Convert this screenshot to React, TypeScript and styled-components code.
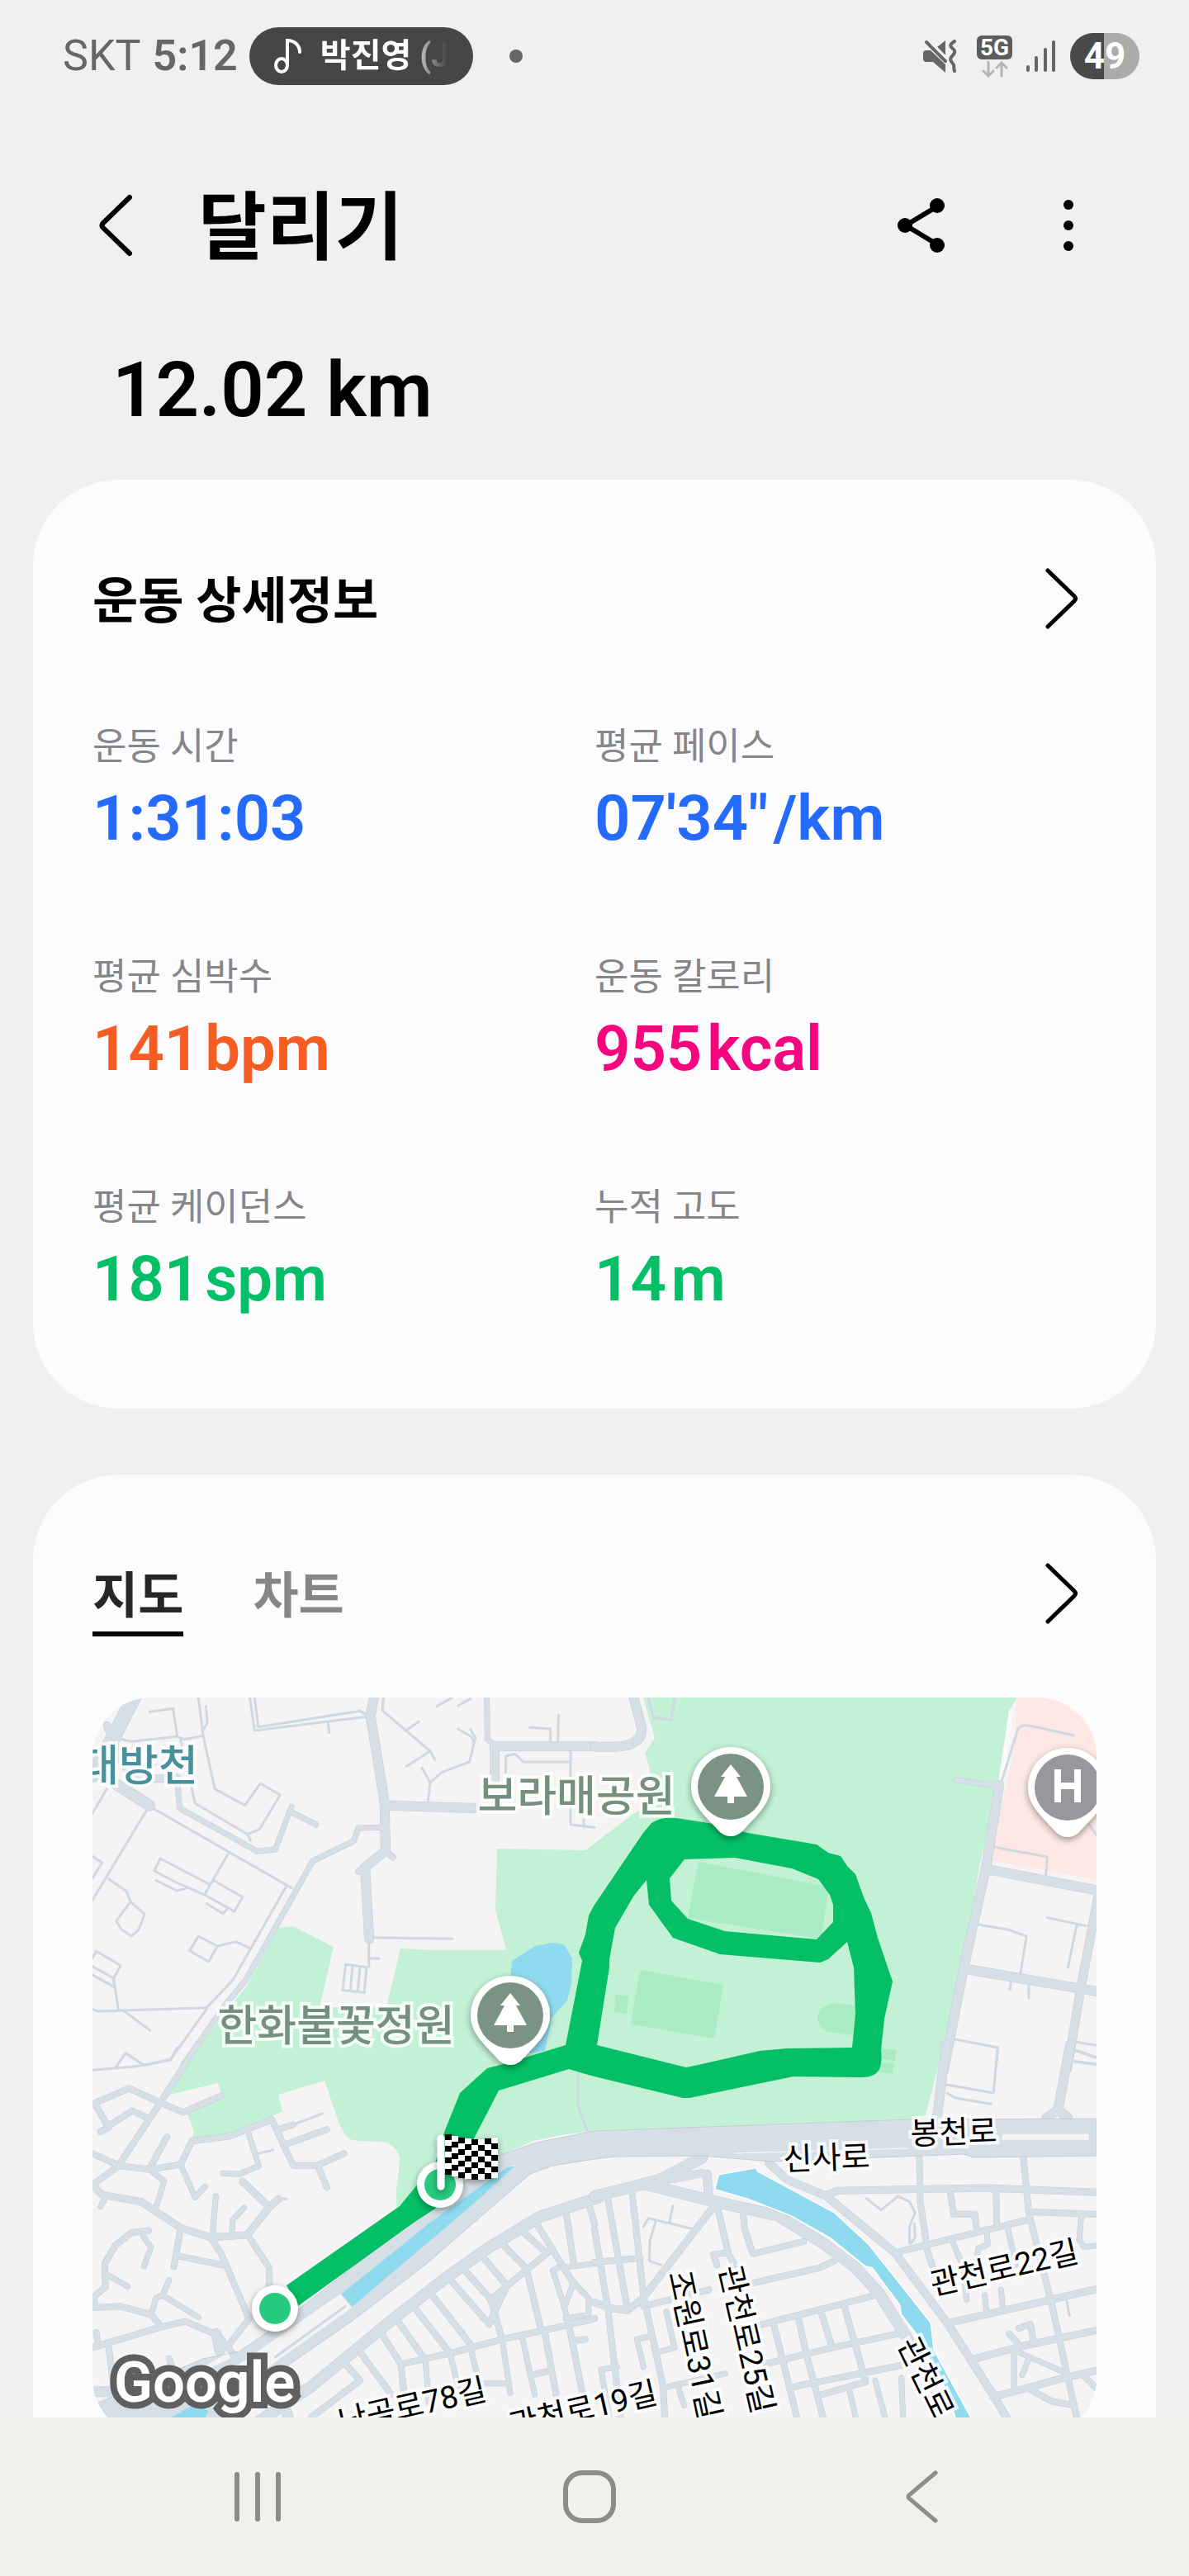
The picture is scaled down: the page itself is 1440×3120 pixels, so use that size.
import * as React from 'react';
import styled, { createGlobalStyle } from 'styled-components';

const colors = {
    page: '#f0f0f2',
    card: '#fcfcfe',
    nav: '#eff1ec',
    navIcon: '#8b8d88',
    status: '#666666',
    label: '#868688',
    blue: '#246bfd',
    orange: '#f55d22',
    pink: '#f7047f',
    green: '#04bf65',
    land: '#f5f3f4',
    park: '#c3f1d6',
    pitch: '#aaecc5',
    water: '#8fdaee',
    road: '#d6dfe6',
    roadEdge: '#c3ccd6',
    path: '#d0d8e2',
};

const GlobalStyle = createGlobalStyle`
    * {
        box-sizing: border-box;
    }
    body {
        margin: 0;
        background: ${colors.page};
        color: #000;
        font-family: Roboto, 'Noto Sans CJK KR', sans-serif;
    }
    button {
        border: 0;
        padding: 0;
        background: none;
        color: inherit;
        font: inherit;
        cursor: pointer;
    }
    h1, h2, p, dl, dd {
        margin: 0;
    }
    svg {
        display: block;
    }
`;

const Screen = styled.div`
    display: flex;
    flex-direction: column;
    height: 100vh;
`;

const Content = styled.main`
    flex: 1;
    min-height: 0;
    overflow: auto;
    scrollbar-width: none;
`;

/* Status bar */

const StatusBar = styled.div`
    display: flex;
    align-items: center;
    justify-content: space-between;
    flex: none;
    height: 136px;
    padding: 0 60px 0 76px;
    color: ${colors.status};
`;

const StatusGroup = styled.div<{ gap: number }>`
    display: flex;
    align-items: center;
    gap: ${(props) => props.gap}px;
`;

const Carrier = styled.span`
    font-size: 52px;
    line-height: 64px;
`;

const Clock = styled(Carrier)`
    font-weight: 600;
`;

const MusicChip = styled.div`
    display: flex;
    align-items: center;
    gap: 22px;
    width: 271px;
    height: 70px;
    padding: 0 28px 0 30px;
    border-radius: 35px;
    background: #454746;
    color: #fff;
`;

const ChipText = styled.span`
    flex: 1;
    overflow: hidden;
    font-size: 40px;
    font-weight: 700;
    line-height: 60px;
    white-space: nowrap;
    mask-image: linear-gradient(to right, #000 65%, transparent 98%);
`;

const NoticeDot = styled.span`
    width: 16px;
    height: 16px;
    margin-left: 30px;
    border-radius: 50%;
    background: ${colors.status};
`;

const Network = styled.div`
    display: flex;
    flex-direction: column;
    align-items: center;
    gap: 2px;
    margin-left: 8px;
`;

const NetworkBadge = styled.span`
    width: 43px;
    border-radius: 6px;
    background: #5c5c5c;
    color: #fff;
    font-size: 28px;
    font-weight: 700;
    line-height: 29px;
    text-align: center;
`;

const Battery = styled.span`
    width: 84px;
    border-radius: 28px;
    background: linear-gradient(to right, #4a4a4a 49%, #ababab 49%);
    color: #fff;
    font-size: 44px;
    font-weight: 700;
    line-height: 56px;
    text-align: center;
`;

/* Title area */

const Header = styled.header`
    display: flex;
    align-items: center;
    height: 273px;
    padding: 0 106px 0 100px;
`;

const IconButton = styled.button`
    display: flex;
    align-items: center;
    justify-content: center;
    width: 80px;
    height: 88px;
`;

const Title = styled.h1`
    flex: 1;
    margin-left: 60px;
    padding-top: 8px;
    font-size: 90px;
    font-weight: 700;
    line-height: 120px;
`;

const Actions = styled.div`
    display: flex;
    gap: 98px;
`;

const Distance = styled.p`
    margin: 0 136px 44px;
    font-size: 92px;
    font-weight: 600;
    line-height: 128px;
`;

/* Cards */

const Card = styled.section`
    margin: 0 40px 80px;
    padding: 100px 72px 109px;
    border-radius: 104px;
    background: ${colors.card};
`;

const CardHead = styled.div<{ space: number }>`
    display: flex;
    align-items: flex-start;
    justify-content: space-between;
    margin-bottom: ${(props) => props.space}px;
`;

const CardTitle = styled.h2`
    padding-top: 6px;
    font-size: 60px;
    font-weight: 700;
    line-height: 84px;
`;

const Tabs = styled.div`
    display: flex;
    gap: 84px;
`;

const Tab = styled.button<{ $active?: boolean }>`
    padding-top: 6px;
    border-bottom: 6px solid ${(props) => (props.$active ? '#000' : 'transparent')};
    color: ${(props) => (props.$active ? '#262628' : colors.label)};
    font-size: 60px;
    font-weight: 700;
    line-height: 84px;
`;

const Stats = styled.dl`
    display: grid;
    grid-template-columns: 1fr 1fr;
    row-gap: 109px;
`;

const StatLabel = styled.dt`
    margin-bottom: 2px;
    color: ${colors.label};
    font-size: 45px;
    line-height: 72px;
`;

const StatValue = styled.dd<{ color: string }>`
    display: flex;
    gap: 6px;
    color: ${(props) => props.color};
    font-size: 76px;
    font-weight: 600;
    line-height: 96px;
`;

/* Map */

const MapFrame = styled.div`
    overflow: hidden;
    border-radius: 72px;
    background: ${colors.land};

    svg {
        width: 100%;
        height: auto;
    }
`;

const Way = styled.path`
    fill: none;
    stroke-linecap: round;
    stroke-linejoin: round;
    vector-effect: non-scaling-stroke;
`;

const StreetText = styled.text`
    fill: #000;
    stroke: rgba(255, 255, 255, 0.8);
    stroke-width: 8px;
    paint-order: stroke;
    font-size: 38px;
    font-weight: 400;
    text-anchor: middle;
`;

const PlaceText = styled(StreetText)<{ color: string }>`
    fill: ${(props) => props.color};
    font-size: 52px;
    font-weight: 500;
`;

const LogoText = styled.text`
    fill: #fff;
    stroke: #5f5f5f;
    stroke-width: 16px;
    paint-order: stroke;
    font-size: 69px;
    font-weight: 600;
`;

/* Bottom navigation */

const NavBar = styled.nav`
    display: grid;
    grid-template-columns: repeat(3, 1fr);
    flex: none;
    height: 192px;
    padding: 0 123px 0 111px;
    background: ${colors.nav};
    justify-items: center;
    align-items: center;
`;

const stats = [
    { label: '운동 시간', value: '1:31:03', unit: '', color: colors.blue },
    { label: '평균 페이스', value: '07\'34"', unit: '/km', color: colors.blue },
    { label: '평균 심박수', value: '141', unit: 'bpm', color: colors.orange },
    { label: '운동 칼로리', value: '955', unit: 'kcal', color: colors.pink },
    { label: '평균 케이던스', value: '181', unit: 'spm', color: colors.green },
    { label: '누적 고도', value: '14', unit: 'm', color: colors.green },
];

type Tile = {
    x: number;
    y: number;
    roads: [number, string][];
    paths: string;
};

// The map is cut into four tiles, each with its own 1568x1380 grid
const tiles: Tile[] = [
    {
        x: -12,
        y: -16,
        roads: [
            [17, 'M160 40L100 180L30 330'],
            [13, 'M30 300L85 350L205 440'],
            [9, 'M75 150L120 280L160 345L290 340'],
            [11, 'M895 30L882 115L925 430L928 605L865 665L878 925'],
            [11, 'M928 440L1210 450'],
            [7, 'M928 605L950 628M865 665L845 680'],
            [6, 'M925 520L845 522L830 570L705 642L500 1075L440 1160L310 1380'],
            [6, 'M1238 30L1240 200L1265 225'],
            [11, 'M1262 225L1568 225M1262 225L1262 345'],
            [6, 'M290 350L297 450L535 607L590 600L640 445M640 465L715 510'],
        ],
        paths:
            'M205 100L277 88L290 190M355 48L370 190L405 380L497 440L545 360L605 402L542 527L505 545L345 433L300 200' +
            'M378 80L382 140L370 165M120 200L150 208L290 190L310 200L370 187M512 48L527 168L870 118M527 48L538 155L850 97L872 112' +
            'M752 140L755 175M922 48L918 95L1065 243L1080 275M1030 135L988 170M1065 243L992 298' +
            'M1150 162L1190 190L1200 210L1185 282L1100 320L1065 357L1040 305M1065 357L1058 425M1188 165L1204 195L1196 215' +
            'M1085 80L1130 50M1150 78L1188 52M1370 157L1433 162L1433 205M1458 112L1456 205' +
            'M1296 320L1297 260L1325 253L1350 282L1495 282L1495 510L1568 520M1495 243L1495 282M1535 490L1535 518' +
            'M215 450L640 740M195 460L30 785M75 378L30 470M30 625L60 648L30 705M505 545L515 568M150 300L250 290' +
            'M80 708L135 752L147 790L190 835L172 892L150 915L120 892L103 860L147 790M445 618L373 765' +
            'M390 728L238 633L220 678L290 722L373 765L465 825L490 773L400 712M225 712L288 750L315 742M380 797L430 833L442 818' +
            'M622 738L460 1075L380 1175L45 1188L30 1180M328 968L355 915L413 952L386 1008L328 968M413 952L470 935L513 960' +
            'M30 995L42 970L117 1022L95 1068L30 1025M30 1055L97 1100L95 1068L110 1185M130 1190L207 1258' +
            'M380 1180L270 1362L190 1385M100 1395L132 1340L190 1385M893 920L1133 925M877 930L877 1025M877 995L908 997' +
            'M806 1018L870 1028L863 1120L797 1112L806 1018M827 1022L820 1115M850 1025L843 1118',
    },
    {
        x: 608,
        y: -16,
        roads: [
            [11, 'M116 30L145 160Q145 225 60 227L0 227'],
            [11, 'M1240 365L1200 660L1130 1035L1070 1400'],
            [6, 'M1105 347L1240 370'],
            [11, 'M1200 672L1568 755M1140 1035L1568 1122'],
            [10, 'M1545 755L1490 1100L1448 1400'],
        ],
        paths:
            'M165 48L180 120L235 130L245 48M1245 360L1295 170Q1300 145 1330 150L1468 185M1225 592L1387 627L1383 692' +
            'M1170 872L1270 892L1323 915L1305 1050M1387 848L1505 878M1477 875L1450 1030M1275 1085L1273 1108M1330 1095L1330 1140' +
            'M1105 1290L1235 1320L1230 1390M1475 1300L1538 1312M1475 1330L1538 1355M1475 1370L1538 1380M1515 510L1545 560',
    },
    {
        x: -12,
        y: 424,
        roads: [
            [7, 'M352 -10L238 200L110 430L30 500'],
            [7, 'M30 205L143 148L238 200L308 235L425 175M38 205L80 290L55 305M80 285L152 230L205 258'],
            [7, 'M30 385L115 430L205 443L300 425L335 340L450 322L580 262M258 325L205 440'],
            [6, 'M300 425L345 545L375 505M205 443L250 485L225 580M60 535L70 545L55 578'],
            [8, 'M30 500L60 535L180 560L300 655L392 690L505 680L572 580L490 487M572 580L600 550'],
            [6, 'M408 540L398 690M495 582L460 625L457 675M505 300L540 430L480 460L430 457'],
            [7, 'M580 262L645 428L720 428L800 385M720 428L748 508M615 355L748 298M595 300L645 280'],
            [7, 'M300 660L280 795M292 757L430 790M392 690L425 750L510 985L445 1085M505 680L572 800L572 870'],
            [7, 'M202 665L150 672L100 720L68 785L70 870L35 905L38 945L115 940L210 970L240 1015'],
            [6, 'M185 685L210 725L188 795M75 825L138 868M265 845L245 900L225 910L210 970M245 900L355 980'],
            [7, 'M30 1090L240 1015L315 995L415 1045L460 1110M42 1035L48 1085M80 1090L95 1230M265 1130L280 1180'],
            [12, 'M30 1250L120 1250M410 1040L420 1100'],
            [13, 'M500 1390L700 1232L960 978L1115 835L1240 730L1400 615L1580 545'],
            [12, 'M600 1230L640 1380'],
            [7, 'M1480 590L1505 790M1550 565L1568 640M1385 630L1500 850M1340 660L1415 740M1275 700L1360 805M1215 745L1300 865'],
            [7, 'M1160 795L1250 915M1120 835L1245 1005M1065 890L1195 1090M1010 935L1125 1110M960 985L1050 1135'],
            [7, 'M905 1020L975 1150L985 1260M840 1090L945 1260M795 1135L850 1210L700 1344'],
            [7, 'M1430 740L1250 915L1285 1060M1360 805L1405 1030M1300 865L1245 1005M975 1150L1130 1110L1285 1060L1480 1010L1568 985'],
            [6, 'M1050 1135L1060 1290M1125 1110L1150 1230M1190 1100L1215 1220L1300 1220M1285 1060L1310 1255M1345 1045L1385 1260'],
            [7, 'M1415 1030L1455 1290M1490 1010L1530 1250M1375 1190L1430 1175M1500 1065L1540 1060'],
            [6, 'M1455 800L1440 810L1470 920L1490 1010M1505 850L1480 930M1470 800L1568 785M1500 850L1550 910L1550 970L1480 985'],
        ],
        paths: 'M30 82L165 68L270 45L290 0M540 385L583 372M645 280L735 240M600 550L625 550M1518 90L1518 215L1547 305M805 940L590 1125',
    },
    {
        x: 608,
        y: 424,
        roads: [
            [11, 'M1077 -10L1050 245M1457 -10L1420 225L1385 255M1420 225L1450 255'],
            [13, 'M0 540L120 505L200 480L330 400'],
            [13, 'M150 495L370 560L560 610L700 710L800 800L870 890L960 1060'],
            [10, 'M160 490L330 458M345 460L350 545'],
            [9, 'M535 420L590 480L710 540L920 745L1080 1000L1220 1260L1270 1360'],
            [8, 'M710 535L745 520L1200 510L1568 527'],
            [7, 'M995 395L998 560L1020 740L1045 830M1313 390L1330 600L1400 930L1480 1360'],
            [7, 'M920 745L1330 625M1335 597L1568 607M1230 520L1232 640M1090 525L1100 605L1165 605L1170 655'],
            [8, 'M1085 1000L1310 940L1568 870M1150 1135L1310 1085L1568 1020M1220 1270L1440 1200L1568 1165'],
            [6, 'M1095 700L1130 800L1140 915M1200 660L1205 715L1175 730L1170 780M1265 650L1290 790M1195 900L1200 950M1245 880L1250 940'],
            [6, 'M1490 620L1485 700L1500 725L1568 715M1285 1100L1440 1180M1285 1100L1285 1250M1330 1130L1310 1190'],
            [7, 'M1270 1040L1300 1080M1300 1020L1335 1005L1345 1070M1330 1240L1400 1285L1470 1300M1500 1195L1538 1240'],
            [8, 'M370 570L145 915L100 955L40 945L0 925'],
            [7, 'M375 570L410 750L430 790M455 600L460 660L485 750L640 705M470 860L690 800L735 775M410 745L365 752L375 790'],
            [7, 'M40 545L100 945M115 525L150 900L210 1230L215 1344M0 660L40 940L80 1344M0 780L140 765M150 940L350 880'],
            [7, 'M500 1010L860 900M550 1010L620 1344M625 985L650 1120L700 1344M695 965L725 1080M765 940L830 1210'],
            [7, 'M520 1150L730 1090L930 1040M600 1235L960 1150M700 1260L830 1215'],
            [6, 'M780 1240L800 1344M860 1210L890 1344M940 1200L945 1344M215 1235L400 1185M255 1230L275 1300'],
            [6, 'M170 1050L130 1060L150 1160M20 1170L70 1160M20 1170L45 1344M200 1105L245 1090L220 960'],
        ],
        paths:
            'M1235 0L1222 165L1080 135M1080 165L1105 183L1215 205M1470 10L1538 38M1470 50L1538 62' +
            'M832 548L878 590L930 540L965 560L982 600L965 650L965 710M980 640L982 690L970 710M240 575L230 635' +
            'M150 650L165 620L315 663M188 630L170 700L168 775L205 790M1445 910L1455 975',
    },
];

const tileTransform = (x: number, y: number) => `translate(${x} ${y}) scale(0.3954 0.3333)`;

const parkShape =
    'M667 0L1120 0L1110 16L1098 104L1075 201L1049 347L1025 444L1009 506L991 511L608 525L573 529L534 537L494 554L407 611L368 616L368 597' +
    'L371 574L372 557Q366 539 350 538L324 537Q308 537 304 526L298 514L281 464L225 481L230 501L166 532L118 539L123 526L115 504L156 481' +
    'L152 467L93 481L126 424L186 351L225 279L243 277L292 302L275 375L356 375L373 304L415 306L501 306L488 257L490 183L597 185' +
    'L655 141L679 127L675 87L669 67L681 49Z';

const boulevardShape =
    'M608 525L991 511L1216 510L1216 555L1067 557L1055 553L823 562L738 555L632 556L608 559L557 567L530 577L403 687L316 754L225 817' +
    'L178 854L154 872L120 896L0 896L0 857L134 801L178 792L233 754L383 637L494 554L538 539Z';

const routeShape =
    'M677 152Q690 144 707 146L746 152L794 164L877 178L891 188L906 192L914 204L924 214L934 242L943 261L951 291L969 344L959 389L955 427' +
    'Q957 444 952 452Q946 460 932 460L849 459L723 485L715 485L608 459L597 456L577 450L492 476L462 534L427 611L389 636L249 737' +
    'L235 712L372 616L415 564L427 524L445 479L478 449L498 444L573 421L593 319L589 309L597 287L601 264L608 251L667 164Z' +
    'M717 196L778 194L847 207L879 220L893 239L897 251L897 272L877 293L766 283L721 268L701 246L699 219Z' +
    'M671 221L674 251L703 291L760 311L881 321L891 317L914 296L922 327L924 384L920 424L841 425L808 428L738 444L719 448L611 421' +
    'L626 327L626 317L633 279L655 241Z';

const Street: React.FC<{ x: number; y: number; turn: number; children: string }> = ({ x, y, turn, children }) => (
    <StreetText y={14} transform={`translate(${x} ${y}) rotate(${turn})`}>
        {children}
    </StreetText>
);

const Pin: React.FC<{ x: number; y: number; fill: string; children: React.ReactNode }> = ({ x, y, fill, children }) => (
    <g transform={`translate(${x} ${y})`}>
        <path
            d="M-48 0A48 48 0 0 1 48 0C48 22 30 36 13 55Q0 65 -13 55C-30 36 -48 22 -48 0Z"
            fill="#fff"
            filter="url(#pin-shadow)"
        />
        <circle r="40" fill={fill} />
        {children}
    </g>
);

const Tree = () => <path d="M0 -27L12 -12H7L20 12H4V20H-4V12H-20L-7 -12H-12Z" fill="#fff" />;

const CheckeredFlag = () => {
    const cells: React.ReactNode[] = [];
    for (let row = 0; row < 7; row += 1) {
        for (let col = 0; col < 8; col += 1) {
            const drop = Math.round(4 * Math.sin((col / 7) * Math.PI * 0.9) + col * 0.4);
            cells.push(
                <rect
                    key={`${row}-${col}`}
                    x={427 + col * 8}
                    y={529 + row * 7 + drop}
                    width="8"
                    height="7"
                    fill={(row + col) % 2 ? '#fff' : '#000'}
                />,
            );
        }
    }
    return (
        <g filter="url(#pin-shadow)">
            {cells}
            <path d="M422 534V592" stroke="#fff" strokeWidth="9" strokeLinecap="round" />
        </g>
    );
};

const RouteMap = () => (
    <MapFrame>
        <svg viewBox="0 0 1216 896" role="img" aria-label="지도">
            <defs>
                <filter id="pin-shadow" x="-30%" y="-30%" width="160%" height="170%">
                    <feDropShadow dx="0" dy="3" stdDeviation="4" floodOpacity="0.4" />
                </filter>
            </defs>

            <path d={parkShape} fill={colors.park} />
            <g transform={tileTransform(608, -16)}>
                <path d="M1295 30H1568V715L1210 640L1285 240Z" fill="#fde8e6" />
                <path d="M1270 95H1284L1252 360H1236Z" fill="#fafafa" />
                <path
                    d="M318 645L718 735L695 925L285 850ZM140 1038L395 1092L367 1287L110 1235ZM65 1127L106 1134L98 1198L60 1190ZM820 1174L740 1158C700 1160 683 1190 683 1212C684 1245 705 1262 725 1264L820 1281ZM870 1320L925 1330L920 1368L870 1360ZM870 1372L918 1378L913 1415L870 1408Z"
                    fill={colors.pitch}
                />
            </g>
            <path
                d="M508 319L536 301L557 297L571 299L581 316L580 346L575 367L556 388L548 428L530 431L505 350Z"
                fill={colors.water}
            />

            {tiles.map((tile) => (
                <g key={`${tile.x} ${tile.y}`} transform={tileTransform(tile.x, tile.y)}>
                    <Way d={tile.paths} stroke={colors.path} strokeWidth="3" />
                    {tile.roads.map(([width, d]) => (
                        <Way key={d} d={d} stroke={colors.roadEdge} strokeWidth={width + 1} />
                    ))}
                    {tile.roads.map(([width, d]) => (
                        <Way key={d} d={d} stroke={colors.road} strokeWidth={width} />
                    ))}
                </g>
            ))}

            <path d={boulevardShape} fill={colors.road} stroke={colors.roadEdge} />
            <g transform={tileTransform(-12, 424)}>
                <path d="M790 895L825 945L480 1235L380 1300L350 1270L480 1150Z" fill={colors.land} />
                <path d="M445 1110L455 1128L380 1170L310 1200Z" fill={colors.land} />
                <Way d="M805 940L590 1125" stroke={colors.path} strokeWidth="3" />
                <path d="M1330 425L1240 520L1225 535L1300 435Z" fill="#fff" />
                <path d="M793 895L825 942L1200 565L1325 430L1300 435L1060 640Z" fill={colors.water} />
                <path d="M250 1360L350 1290L385 1320L370 1360Z" fill={colors.water} />
            </g>
            <g transform={tileTransform(608, 424)}>
                <path d="M230 495L330 472V525Z" fill={colors.land} />
                <path d="M1247 313L1515 313V337H1247Z" fill={colors.land} stroke="#c3ccd6" />
                <Way d="M430 384L960 366" stroke="#fafbfc" strokeWidth="1" />
                <path
                    d="M368 515L380 462L495 437L500 450L735 600L840 715L1030 1000L1040 1100L1160 1360L1110 1360L1075 1240L1030 1140L985 1040L940 970L935 935L850 800L830 795L720 690L600 610L470 550Z"
                    fill={colors.water}
                    stroke="#fff"
                    strokeWidth="4"
                />
            </g>

            <path d={routeShape} fill={colors.green} fillRule="evenodd" />

            <PlaceText x={56} y={101} color="#47909c">
                대방천
            </PlaceText>
            <PlaceText x={586} y={138} color="#76907f">
                보라매공원
            </PlaceText>
            <PlaceText x={295} y={416} color="#76907f">
                한화불꽃정원
            </PlaceText>

            <Street x={889} y={557} turn={-2}>신사로</Street>
            <Street x={1043} y={526} turn={-2}>봉천로</Street>
            <Street x={1104} y={690} turn={-13}>관천로22길</Street>
            <Street x={730} y={784} turn={78}>조원로31길</Street>
            <Street x={793} y={777} turn={77}>관천로25길</Street>
            <Street x={1010} y={824} turn={64}>관천로</Street>
            <Street x={387} y={857} turn={-13}>난곡로78길</Street>
            <Street x={594} y={861} turn={-13}>관천로19길</Street>

            <Pin x={773} y={108} fill="#7a9384">
                <Tree />
            </Pin>
            <Pin x={506} y={385} fill="#7a9384">
                <Tree />
            </Pin>
            <Pin x={1181} y={109} fill="#96989d">
                <path d="M-12 -22V18M12 -22V18M-12 -2H12" fill="none" stroke="#fff" strokeWidth="8" />
            </Pin>

            {[
                [221, 740],
                [421, 590],
            ].map(([x, y]) => (
                <g key={x} filter="url(#pin-shadow)">
                    <circle cx={x} cy={y} r="28" fill="#fff" />
                    <circle cx={x} cy={y} r="19" fill="#26ca7d" />
                </g>
            ))}
            <CheckeredFlag />

            <LogoText x={26} y={853}>
                Google
            </LogoText>
        </svg>
    </MapFrame>
);

const Chevron: React.FC<{ left?: boolean; stroke?: number }> = ({ left, stroke = 5 }) => (
    <svg width="44" height="78" viewBox="0 0 44 78" fill="none" stroke="currentColor" strokeWidth={stroke}>
        <path
            d={left ? 'M39 5L7 36Q4 39 7 42L39 73' : 'M3 5L35 36Q38 39 35 42L3 73'}
            strokeLinecap="round"
            strokeLinejoin="round"
        />
    </svg>
);

const NavButton = styled(IconButton)`
    width: 160px;
    height: 120px;
    color: ${colors.navIcon};
`;

const StatusIcons = () => (
    <StatusGroup gap={16}>
        <svg width="41" height="40" viewBox="0 0 41 40" fill={colors.status}>
            <path d="M0 17Q0 13 4 13H9L27 30V40L12 27H4Q0 27 0 23Z" />
            <path d="M17 9L27 1V19Z" />
            <path
                d="M4 3L27 26M38 2C32 6 32 8 36 11S38 17 35 20S33 26 36 29S36 34 38 38"
                fill="none"
                stroke={colors.status}
                strokeWidth="4"
                strokeLinecap="round"
            />
            <path d="M9 3L28 22" stroke={colors.page} strokeWidth="3" />
        </svg>
        <Network>
            <NetworkBadge>5G</NetworkBadge>
            <svg width="32" height="20" viewBox="0 0 32 20" fill="none" stroke="#b4b4b4" strokeWidth="3" strokeLinecap="round">
                <path d="M8 1V18M2 12L8 18L14 12M24 18V2M18 8L24 2L30 8" />
            </svg>
        </Network>
        <svg width="38" height="40" viewBox="0 0 38 40" stroke={colors.status} strokeWidth="4" strokeLinecap="round">
            <path d="M3 33V37M13 22V37M24 12V37M34 3V37" />
        </svg>
        <Battery>49</Battery>
    </StatusGroup>
);

const App: React.FC = () => {
    const [tab, setTab] = React.useState('지도');

    return (
        <>
            <GlobalStyle />
            <Screen>
                <StatusBar>
                    <StatusGroup gap={14}>
                        <Carrier>SKT</Carrier>
                        <Clock>5:12</Clock>
                        <MusicChip>
                            <svg width="34" height="42" viewBox="0 0 34 42" fill="none" stroke="#fff" strokeWidth="4">
                                <ellipse cx="9" cy="32" rx="7" ry="8" />
                                <path d="M16 32V2C25 2 31 8 31 16" strokeLinecap="round" />
                            </svg>
                            <ChipText>박진영 (J.</ChipText>
                        </MusicChip>
                        <NoticeDot />
                    </StatusGroup>
                    <StatusIcons />
                </StatusBar>

                <Content>
                    <Header>
                        <IconButton aria-label="뒤로">
                            <Chevron left stroke={6} />
                        </IconButton>
                        <Title>달리기</Title>
                        <Actions>
                            <IconButton aria-label="공유">
                                <svg width="60" height="68" viewBox="0 0 60 68">
                                    <path d="M49 11L11 34L49 57" fill="none" stroke="#000" strokeWidth="6" />
                                    <circle cx="49" cy="10" r="9" />
                                    <circle cx="10" cy="34" r="9" />
                                    <circle cx="49" cy="58" r="9" />
                                </svg>
                            </IconButton>
                            <IconButton aria-label="더보기">
                                <svg width="52" height="64" viewBox="0 0 52 64">
                                    <circle cx="26" cy="7" r="6" />
                                    <circle cx="26" cy="32" r="6" />
                                    <circle cx="26" cy="57" r="6" />
                                </svg>
                            </IconButton>
                        </Actions>
                    </Header>
                    <Distance>12.02 km</Distance>

                    <Card>
                        <CardHead space={98}>
                            <CardTitle>운동 상세정보</CardTitle>
                            <IconButton aria-label="운동 상세정보 보기">
                                <Chevron />
                            </IconButton>
                        </CardHead>
                        <Stats>
                            {stats.map((stat) => (
                                <div key={stat.label}>
                                    <StatLabel>{stat.label}</StatLabel>
                                    <StatValue color={stat.color}>
                                        <span>{stat.value}</span>
                                        {stat.unit && <span>{stat.unit}</span>}
                                    </StatValue>
                                </div>
                            ))}
                        </Stats>
                    </Card>

                    <Card>
                        <CardHead space={74}>
                            <Tabs>
                                {['지도', '차트'].map((name) => (
                                    <Tab key={name} $active={tab === name} onClick={() => setTab(name)}>
                                        {name}
                                    </Tab>
                                ))}
                            </Tabs>
                            <IconButton aria-label="지도 보기">
                                <Chevron />
                            </IconButton>
                        </CardHead>
                        <RouteMap />
                    </Card>
                </Content>

                <NavBar>
                    <NavButton aria-label="최근 앱">
                        <svg width="60" height="64" viewBox="0 0 60 64" stroke="currentColor" strokeWidth="6" strokeLinecap="round">
                            <path d="M5 5V59M30 5V59M55 5V59" />
                        </svg>
                    </NavButton>
                    <NavButton aria-label="홈">
                        <svg width="64" height="64" viewBox="0 0 64 64" fill="none" stroke="currentColor" strokeWidth="6">
                            <rect x="3" y="3" width="58" height="58" rx="20" />
                        </svg>
                    </NavButton>
                    <NavButton aria-label="이전">
                        <svg width="42" height="66" viewBox="0 0 42 66" fill="none" stroke="currentColor" strokeWidth="5">
                            <path d="M38 4L6 31Q4 33 6 35L38 62" strokeLinecap="round" />
                        </svg>
                    </NavButton>
                </NavBar>
            </Screen>
        </>
    );
};

export default App;
